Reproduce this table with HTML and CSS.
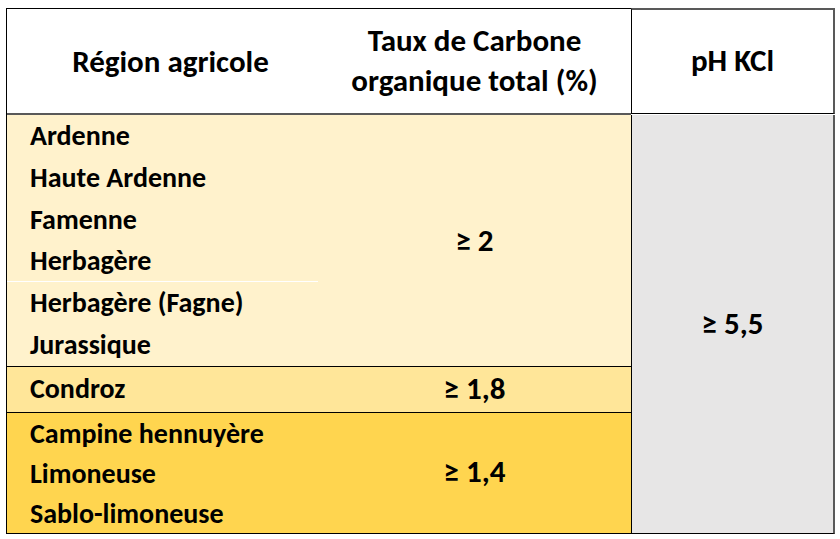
FILE: index.html
```html
<!DOCTYPE html>
<html lang="fr">
<head>
<meta charset="utf-8">
<title>Région agricole</title>
<link rel="stylesheet" href="styles.css">
</head>
<body>
<div class="table">
  <div class="h h1">Région agricole</div>
  <div class="h h2">Taux de Carbone<br>organique total (%)</div>
  <div class="h h3">pH KCl</div>

  <div class="names g1">
    <div class="block">
      <div class="line">Ardenne</div>
      <div class="line">Haute Ardenne</div>
      <div class="line">Famenne</div>
      <div class="line">Herbagère</div>
    </div>
    <div class="block split">
      <div class="line">Herbagère (Fagne)</div>
      <div class="line">Jurassique</div>
    </div>
  </div>
  <div class="val g1">≥ 2</div>

  <div class="ph">≥ 5,5</div>

  <div class="names g2 sep"><div class="line">Condroz</div></div>
  <div class="val g2 sep">≥ 1,8</div>

  <div class="names g3 sep last">
    <div class="line">Campine hennuyère</div>
    <div class="line">Limoneuse</div>
    <div class="line">Sablo-limoneuse</div>
  </div>
  <div class="val g3 sep last">≥ 1,4</div>
</div>
</body>
</html>
```
FILE: styles.css
```css
html, body {
  margin: 0;
  padding: 0;
  background: #ffffff;
}
body {
  padding: 8px 0 0 6px;
  font-family: Carlito, Lato, "Liberation Sans", sans-serif;
  font-weight: 700;
  font-size: 28px;
  color: #000;
}
.table {
  display: grid;
  grid-template-columns: 311px 313px 204px;
  grid-template-rows: 107px 251px 46px 122px;
  border-left: 1px solid #000;
  width: 828px;
}
.h {
  display: flex;
  align-items: center;
  justify-content: center;
  text-align: center;
  background: #fff;
  line-height: 40px;
  font-size: 31px;
}
.h1, .h2 {
  border-top: 1px solid #000;
  border-bottom: 2px solid #595959;
}
.h1 {
  padding-left: 16px;
}
.h2 {
  padding-bottom: 2px;
}
.h3 {
  border-top: 2px solid #595959;
  border-left: 1px solid #000;
  border-right: 2px solid #595959;
  border-bottom: 1px solid #000;
  margin-bottom: 1px;
  padding-bottom: 4px;
}
.g1 { background: #fff2cc; }
.g2 { background: #ffe699; }
.g3 { background: #ffd54f; }
.sep { border-top: 1px solid #000; }
.last { border-bottom: 1px solid #000; }

.names {
  padding-left: 23px;
}
.line {
  height: 41.8px;
  line-height: 41.8px;
  box-sizing: border-box;
  white-space: nowrap;
}
.g1.names {
  padding-left: 0;
}
.g1 .line {
  padding-left: 23px;
}
.block.split {
  border-top: 1px solid #fff;
  margin-top: -1px;
}
.g2 .line {
  height: 44px;
  line-height: 44px;
}
.g3 .line {
  height: 40px;
  line-height: 40px;
  padding-top: 1px;
}
.val {
  display: flex;
  align-items: center;
  justify-content: center;
  padding-bottom: 1px;
  font-size: 31px;
}
.g2.val { padding-bottom: 4px; }
.g3.val { padding-bottom: 4px; }
.ph {
  grid-column: 3;
  grid-row: 2 / 5;
  background: #e7e6e6;
  border-left: 1px solid #000;
  border-right: 2px solid #595959;
  border-bottom: 1px solid #000;
  display: flex;
  align-items: center;
  justify-content: center;
  padding-bottom: 2px;
  font-size: 31px;
}
```
